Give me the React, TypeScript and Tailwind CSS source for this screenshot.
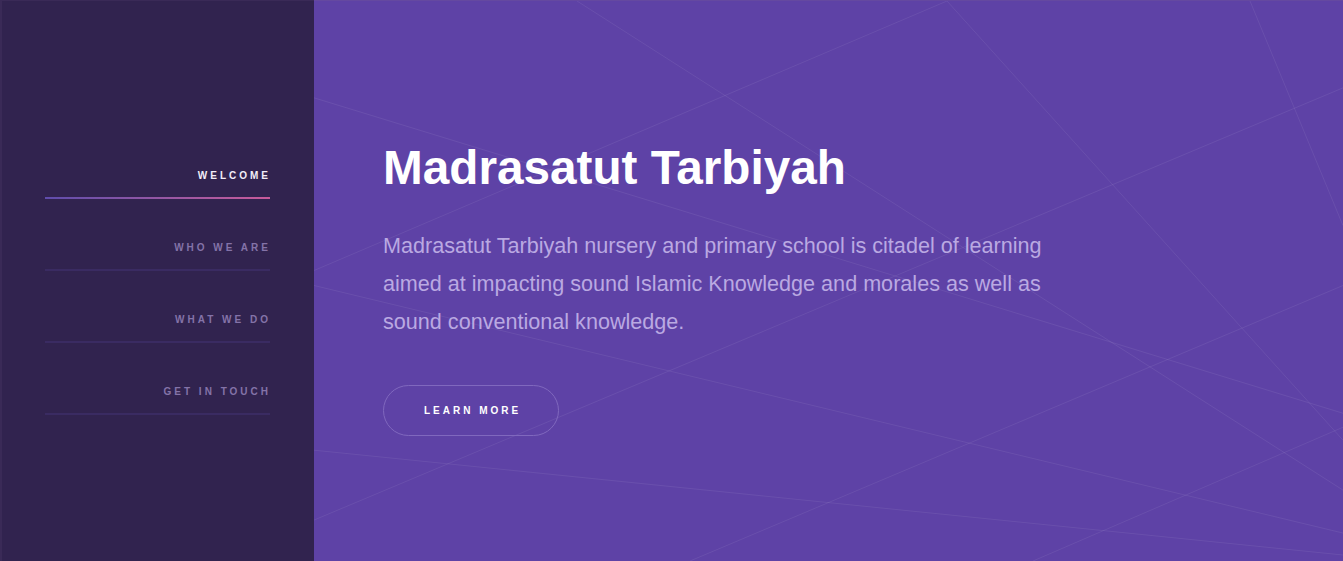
import React from "react";

const navItems = [
  { label: "WELCOME", active: true },
  { label: "WHO WE ARE", active: false },
  { label: "WHAT WE DO", active: false },
  { label: "GET IN TOUCH", active: false },
];

// faint criss-cross lines over the hero, in panel coords (1029 x 561)
const lines: [number, number, number, number][] = [
  [263, 0, 1029, 490],
  [633, 0, 1029, 440],
  [936, 0, 1029, 225],
  [0, 520, 1029, 87],
  [0, 97, 1029, 413],
  [0, 285, 1029, 533],
  [0, 450, 1029, 555],
  [376, 561, 1029, 285],
  [719, 561, 1029, 427],
  [633, 0, 0, 270],
];

function Sidebar() {
  return (
    <aside className="w-[314px] shrink-0 h-full bg-[#31234f] border-l-2 border-t border-[#3a2a57]">
      <nav className="ml-[43px] w-[225px] pt-[169px] flex flex-col gap-[43px]">
        {navItems.map((item) => (
          <div key={item.label} className="flex flex-col">
            <div
              className={
                "-mr-[1px] text-right text-[10px] leading-[12px] font-bold tracking-[0.3em] " +
                (item.active ? "text-[#f3eef8]" : "text-[#8473a8]")
              }
            >
              {item.label}
            </div>
            {item.active ? (
              <div className="mt-[15px] h-[2px] w-full bg-gradient-to-r from-[#5f4cab] to-[#c85a9a]" />
            ) : (
              <div className="mt-[15px] h-[2px] w-full bg-[#3a2b62]" />
            )}
          </div>
        ))}
      </nav>
    </aside>
  );
}

function Hero() {
  return (
    <main className="relative flex-1 h-full overflow-hidden bg-[#5e42a6] border-t border-[#6549a0]">
      <svg
        className="absolute inset-0 h-full w-full"
        viewBox="0 0 1029 561"
        preserveAspectRatio="none"
        aria-hidden="true"
      >
        {lines.map(([x1, y1, x2, y2], i) => (
          <line key={i} x1={x1} y1={y1} x2={x2} y2={y2} stroke="rgba(255,255,255,0.075)" strokeWidth="1" />
        ))}
      </svg>

      <div className="relative pl-[69px] pt-[139px]">
        <h1 className="text-[47.7px] leading-[55px] font-bold text-white">Madrasatut Tarbiyah</h1>
        <p className="mt-[32px] max-w-[680px] text-[21.6px] leading-[1.75] text-[#baa9e2]">
          Madrasatut Tarbiyah nursery and primary school is citadel of learning aimed at impacting sound Islamic
          Knowledge and morales as well as sound conventional knowledge.
        </p>
        <button className="mt-[45px] h-[51px] w-[176px] flex items-center rounded-full border border-[#8068be] pl-10 text-[10px] font-bold tracking-[0.3em] text-white">
          LEARN MORE
        </button>
      </div>
    </main>
  );
}

export default function App() {
  return (
    <div className="flex h-[561px] w-full overflow-hidden" style={{ fontFamily: '"Liberation Sans", Arial, sans-serif' }}>
      <Sidebar />
      <Hero />
    </div>
  );
}
